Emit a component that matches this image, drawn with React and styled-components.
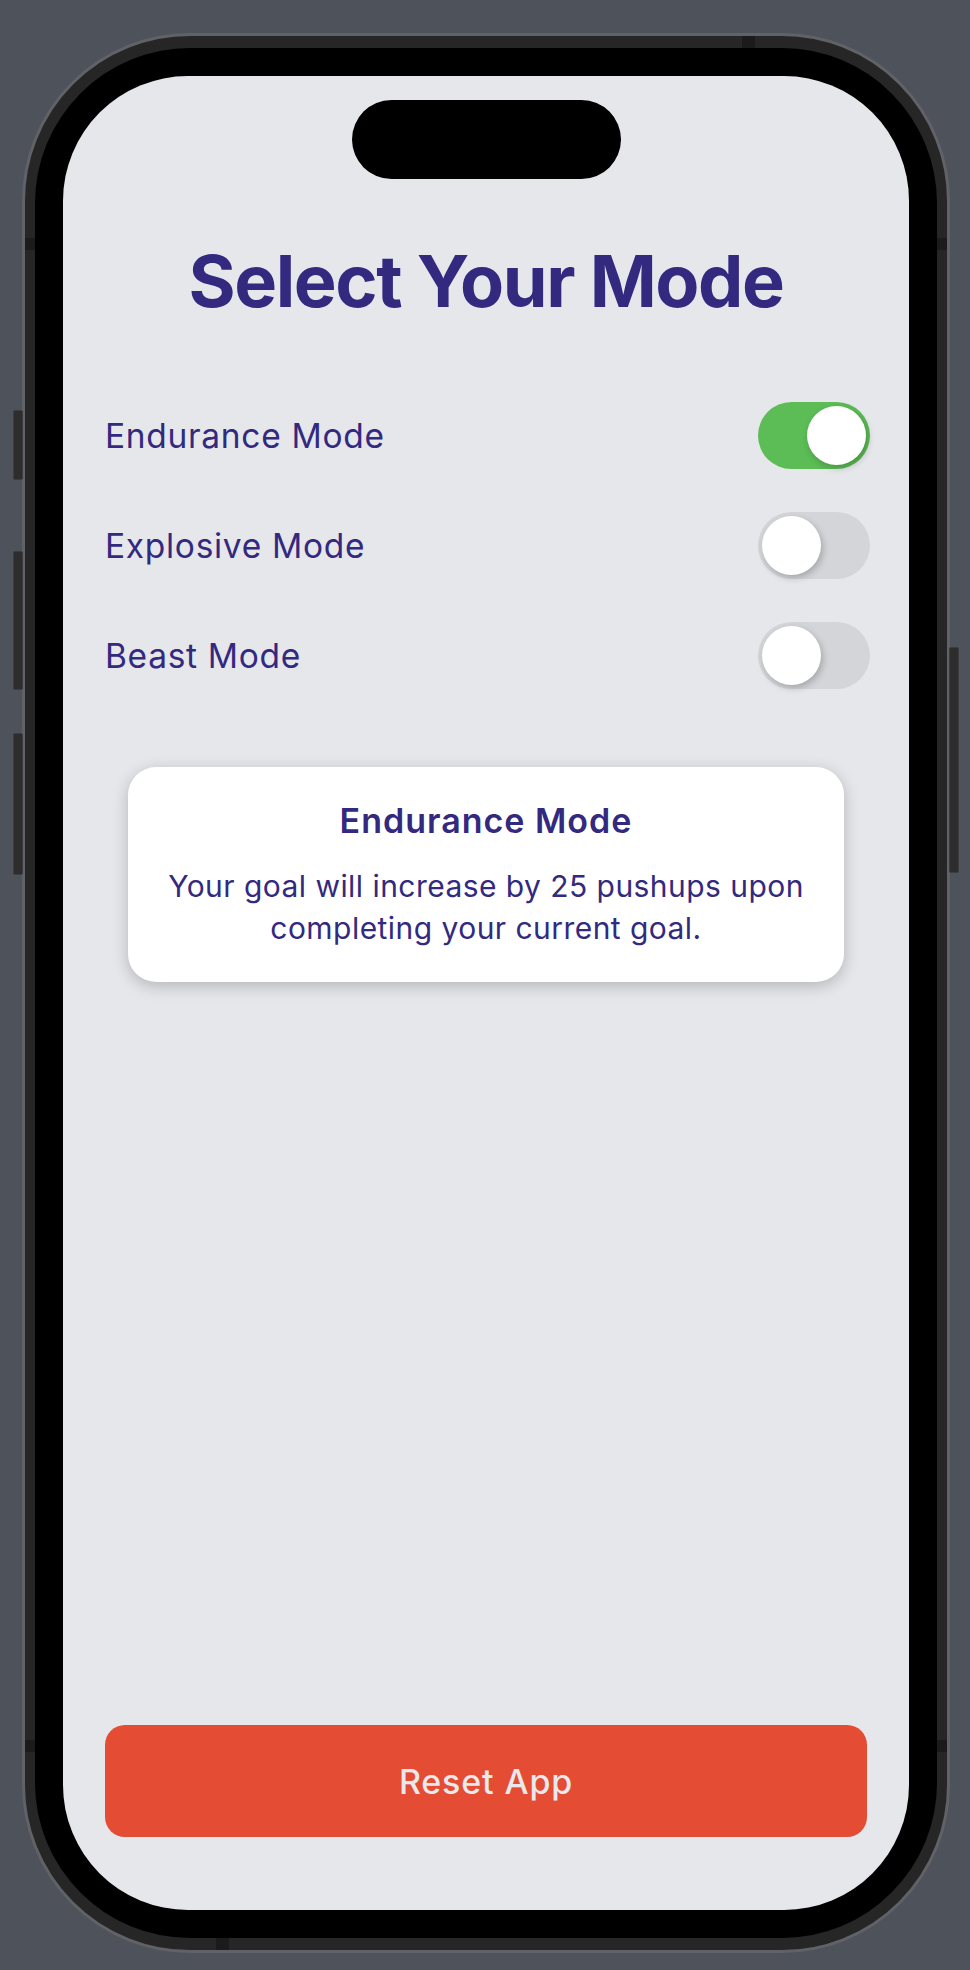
import styled, { createGlobalStyle } from "styled-components";

const GlobalStyle = createGlobalStyle`
  * { box-sizing: border-box; }
  body {
    margin: 0;
    background: #4d525b;
    font-family: Inter, "Noto Sans", "Liberation Sans", sans-serif;
  }
`;

const Stage = styled.div`
  height: 1970px;
  padding: 33px 0 0 22px;
`;

const Phone = styled.div`
  position: relative;
  width: 928px;
  height: 1920px;
  border: 3px solid #606267;
  border-radius: 168px;
  background: #262626;
  padding: 12px 10px;
`;

// hardware buttons sticking out of the frame
const SideButton = styled.span`
  position: absolute;
  top: ${(p) => p.$top}px;
  height: ${(p) => p.$h}px;
  width: 10px;
  ${(p) => (p.$right ? "right: -12px;" : "left: -12px;")}
  background: #2d2d2d;
  border: 1px solid #3b3d41;
  border-radius: 2px;
`;

// small antenna breaks in the metal band
const AntennaMark = styled.span`
  position: absolute;
  background: #1b1b1b;
  width: ${(p) => (p.$horizontal ? 13 : 10)}px;
  height: 12px;
  ${(p) => p.$at}
`;

const Bezel = styled.div`
  height: 100%;
  background: #000;
  border-radius: 155px;
  padding: 28px;
`;

const Screen = styled.div`
  height: 100%;
  background: #e6e7eb;
  border-radius: 125px;
  padding: 24px 42px 73px;
  display: flex;
  flex-direction: column;
  overflow: hidden;
  color: #332a80;
`;

const Island = styled.div`
  width: 269px;
  height: 79px;
  margin: 0 auto;
  background: #000;
  border-radius: 40px;
`;

const Title = styled.h1`
  margin: 59px 0 0;
  font-size: 72px;
  line-height: 86px;
  font-weight: 700;
  letter-spacing: -0.02em;
  text-align: center;
`;

const ModeList = styled.div`
  margin-top: 78px;
  display: flex;
  flex-direction: column;
  gap: 43px;
`;

const ModeRow = styled.div`
  display: flex;
  align-items: center;
  justify-content: space-between;
  margin-right: -3px;
`;

const ModeLabel = styled.span`
  font-size: 33.5px;
  font-weight: 400;
  letter-spacing: 0.7px;
`;

const Track = styled.div`
  width: 112px;
  height: 67px;
  border-radius: 34px;
  padding: 4px;
  display: flex;
  align-items: center;
  justify-content: ${(p) => (p.$on ? "flex-end" : "flex-start")};
  background: ${(p) => (p.$on ? "#5cbc55" : "#d4d5d9")};
`;

const Knob = styled.div`
  width: 59px;
  height: 59px;
  border-radius: 50%;
  background: #fff;
  box-shadow: 2px 3px 7px rgba(0, 0, 0, 0.22);
`;

const InfoCard = styled.div`
  margin: 78px 23px 0 23px;
  background: #fff;
  border-radius: 28px;
  padding: 34px 24px 33px;
  text-align: center;
  box-shadow: 0 4px 16px rgba(0, 0, 0, 0.22);
`;

const CardTitle = styled.div`
  font-size: 34px;
  line-height: 40px;
  font-weight: 600;
  letter-spacing: 1px;
`;

const CardText = styled.p`
  margin: 24px 0 0;
  font-size: 30px;
  line-height: 42px;
  letter-spacing: 0.45px;
`;

const ResetButton = styled.button`
  margin-top: auto;
  height: 112px;
  border: none;
  border-radius: 20px;
  background: #e44c34;
  color: #e9e9ec;
  font-family: inherit;
  font-size: 34px;
  font-weight: 500;
  letter-spacing: 0.85px;
`;

function Switch({ on }) {
  return (
    <Track $on={on}>
      <Knob />
    </Track>
  );
}

const modes = [
  { name: "Endurance Mode", on: true },
  { name: "Explosive Mode", on: false },
  { name: "Beast Mode", on: false },
];

export default function App() {
  return (
    <Stage>
      <GlobalStyle />
      <Phone>
        <SideButton $top={374} $h={70} />
        <SideButton $top={515} $h={139} />
        <SideButton $top={697} $h={142} />
        <SideButton $right $top={611} $h={226} />
        <AntennaMark $horizontal $at="top: 0; left: 717px;" />
        <AntennaMark $horizontal $at="bottom: 0; left: 191px;" />
        <AntennaMark $at="top: 202px; left: 0;" />
        <AntennaMark $at="top: 202px; right: 0;" />
        <AntennaMark $at="top: 1704px; left: 0;" />
        <AntennaMark $at="top: 1704px; right: 0;" />
        <Bezel>
          <Screen>
            <Island />
            <Title>Select Your Mode</Title>
            <ModeList>
              {modes.map((m) => (
                <ModeRow key={m.name}>
                  <ModeLabel>{m.name}</ModeLabel>
                  <Switch on={m.on} />
                </ModeRow>
              ))}
            </ModeList>
            <InfoCard>
              <CardTitle>Endurance Mode</CardTitle>
              <CardText>
                Your goal will increase by 25 pushups upon completing your current goal.
              </CardText>
            </InfoCard>
            <ResetButton>Reset App</ResetButton>
          </Screen>
        </Bezel>
      </Phone>
    </Stage>
  );
}
